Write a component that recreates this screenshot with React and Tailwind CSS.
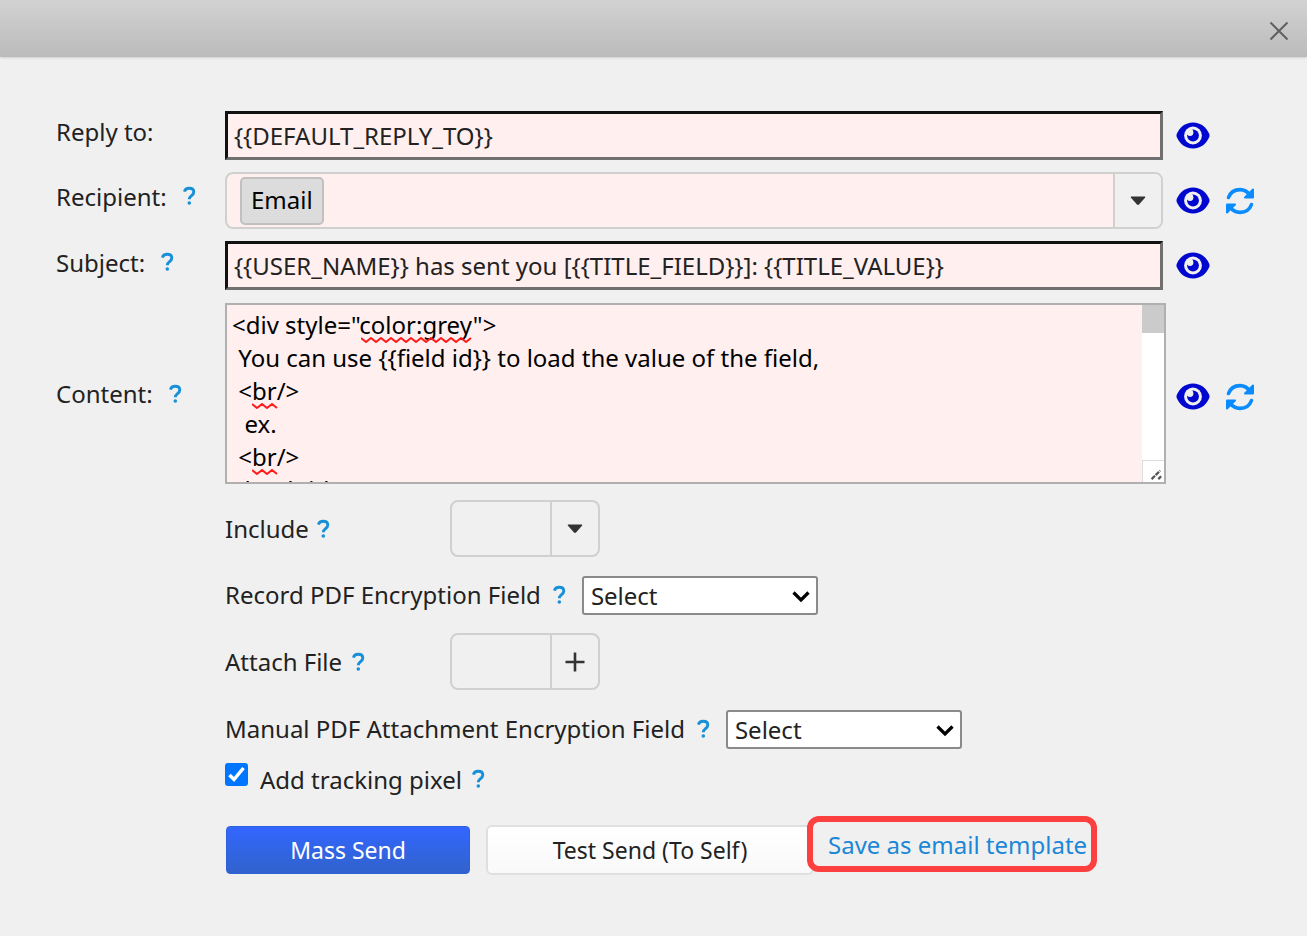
import { useState } from "react";

const body = `<div style="color:grey">
 You can use {{field id}} to load the value of the field,
 <br/>
  ex.
 <br/>
  load title
</div>`;

function Help() {
  return (
    <svg viewBox="0 0 13 20" className="h-5 w-[13px] shrink-0 text-[#1890d8]" fill="none" stroke="currentColor" aria-hidden="true">
      <path d="M1.4 5.6C2 3.4 3.9 2.3 6.2 2.300c2.800 0 4.600 1.400 4.600 3.700 0 1.900-1.100 2.800-2.500 3.900-1.300 1-2 1.700-2 3.400" strokeWidth="2.9" />
      <circle cx="6.3" cy="17" r="1.8" fill="currentColor" stroke="none" />
    </svg>
  );
}

function Eye() {
  return (
    <button type="button" aria-label="Preview" className="shrink-0">
      <svg viewBox="0 0 34 27" className="h-[27px] w-[34px]">
        <path d="M17 .5C25 .5 30.5 5.5 33.3 12c.3.9.3 2.1 0 3C30.5 21.5 25 26.5 17 26.5S3.5 21.5.7 15c-.3-.9-.3-2.1 0-3C3.5 5.5 9 .5 17 .5z" fill="#0008cf" />
        <circle cx="17" cy="13.5" r="8.9" fill="#f0f0f0" />
        <circle cx="17" cy="13.5" r="5.9" fill="#0008cf" />
        <circle cx="14" cy="10.5" r="3.4" fill="#f0f0f0" />
      </svg>
    </button>
  );
}

function Refresh() {
  return (
    <button type="button" aria-label="Reset" className="shrink-0">
      <svg viewBox="0 0 30 28" className="h-7 w-[30px]" fill="none" stroke="#0a8cff" strokeWidth="3.6" strokeLinecap="round" strokeLinejoin="round">
        <path d="M3.5 10.5C5.5 5 10 2.6 15 2.6c4.5 0 7.5 2 10.5 5.8" />
        <path d="M28 2.5v8h-8z" fill="#0a8cff" strokeWidth="2" />
        <path d="M26.5 17.5C24.5 23 20 25.4 15 25.4c-4.5 0-7.5-2-10.5-5.8" />
        <path d="M2 25.5v-8h8z" fill="#0a8cff" strokeWidth="2" />
      </svg>
    </button>
  );
}

function Caret() {
  return (
    <svg viewBox="0 0 16 10" className="h-[10px] w-4">
      <path d="M1.5.5h13c.8 0 1 .7.5 1.200L9 8.6c-.6.6-1.4.6-2 0L1 1.7C.5 1.2.7.5 1.5.5z" fill="#333" />
    </svg>
  );
}

function Plus() {
  return (
    <svg viewBox="0 0 20 20" className="h-5 w-5" stroke="#333" strokeWidth="2.6">
      <path d="M10 .5v19M.5 10h19" />
    </svg>
  );
}

function Wave({ width }) {
  const points = [];
  for (let x = 0; x <= width; x += 5) {
    points.push(`${x},${(x / 5) % 2 ? 5 : 1}`);
  }
  return (
    <svg width={width} height="7" fill="none" stroke="#ff1a1a" strokeWidth="2" strokeLinejoin="round">
      <polyline points={points.join(" ")} />
    </svg>
  );
}

function TextField({ id, value, onChange }) {
  return (
    <input
      id={id}
      type="text"
      value={value}
      onChange={(e) => onChange(e.target.value)}
      className="h-[49px] min-w-0 flex-1 border-3 border-t-[#111] border-r-[#707070] border-b-[#707070] border-l-[#111] bg-[#ffefef] px-[6px]"
    />
  );
}

function Combo({ id, label, children }) {
  return (
    <div className="flex h-[57px] w-[150px] overflow-hidden rounded-lg border-2 border-[#d0d0d0]">
      <input id={id} type="text" className="min-w-0 flex-1" />
      <button type="button" aria-label={label} className="flex w-12 items-center justify-center border-l-2 border-[#d0d0d0]">
        {children}
      </button>
    </div>
  );
}

function SelectBox({ id }) {
  return (
    <div className="relative w-[236px]">
      <select id={id} className="block h-[39px] w-full appearance-none rounded-[3px] border-2 border-[#8a8a8a] bg-white px-[7px]">
        <option>Select</option>
      </select>
      <svg viewBox="0 0 18 12" className="pointer-events-none absolute top-[15px] right-2 h-3 w-[18px]" fill="none" stroke="#000" strokeWidth="3.2">
        <path d="M1.5 1.5L9 9l7.5-7.5" />
      </svg>
    </div>
  );
}

export default function App() {
  const [replyTo, setReplyTo] = useState("{{DEFAULT_REPLY_TO}}");
  const [subject, setSubject] = useState("{{USER_NAME}} has sent you [{{TITLE_FIELD}}]: {{TITLE_VALUE}}");
  const [content, setContent] = useState(body);
  const [tracking, setTracking] = useState(true);

  return (
    <div className="min-h-screen bg-[#f0f0f0] font-['Noto_Sans','Open_Sans',sans-serif] text-[24px] leading-[33px] text-[#222]">
      {/* title bar */}
      <header className="flex h-[57px] items-center justify-end bg-linear-to-b from-[#d2d2d2] to-[#bbb] pt-1 pr-[18px] shadow-sm">
        <button type="button" aria-label="Close">
          <svg viewBox="0 0 20 20" className="h-5 w-5" stroke="#606060" strokeWidth="2">
            <path d="M1.5 1.5l17 17M18.5 1.5l-17 17" />
          </svg>
        </button>
      </header>

      <form className="pt-[54px] pr-[52px] pl-14" onSubmit={(e) => e.preventDefault()}>
        {/* addressing */}
        <div className="grid grid-cols-[169px_minmax(0,1fr)_92px] gap-y-3">
          <label htmlFor="reply" className="pt-1">Reply to:</label>
          <div className="flex">
            <TextField id="reply" value={replyTo} onChange={setReplyTo} />
          </div>
          <div className="flex items-center pl-[13px]"><Eye /></div>

          <div className="flex items-center gap-4 pb-[9px]">
            <label htmlFor="recipient">Recipient:</label>
            <Help />
          </div>
          <div className="flex h-[57px] overflow-hidden rounded-lg border-2 border-[#d0d0d0] bg-[#ffefef]">
            <span className="my-[3px] ml-[13px] flex h-12 items-center rounded-[5px] border-2 border-[#c0c0c0] bg-[#dcdcdc] px-[9px] pb-1 text-black">
              Email
            </span>
            <input id="recipient" type="text" className="min-w-0 flex-1" />
            <button type="button" aria-label="Choose recipient" className="flex w-12 items-center justify-center border-l-2 border-[#d0d0d0] bg-[#f0f0f0]">
              <Caret />
            </button>
          </div>
          <div className="flex items-center gap-[15px] pl-[13px]"><Eye /><Refresh /></div>

          <div className="flex items-center gap-4 pb-2">
            <label htmlFor="subject">Subject:</label>
            <Help />
          </div>
          <div className="flex pb-px">
            <TextField id="subject" value={subject} onChange={setSubject} />
          </div>
          <div className="flex items-center pb-[2px] pl-[13px]"><Eye /></div>

          <div className="flex items-center gap-4">
            <label htmlFor="content">Content:</label>
            <Help />
          </div>
          <div className="relative -mr-[3px] flex h-[181px] border-2 border-[#b0b0b0] bg-[#ffefef]">
            <textarea
              id="content"
              value={content}
              spellCheck={false}
              onChange={(e) => setContent(e.target.value)}
              className="min-w-0 flex-1 resize-none overflow-hidden px-[5px] pt-[3px] text-black"
            />
            {/* scrollbar */}
            <div className="flex w-[22px] flex-col justify-between bg-white">
              <div className="h-7 bg-[#cbcbcb]" />
              <svg viewBox="0 0 22 22" className="h-[22px] w-[22px] border-t border-l border-[#ddd]" stroke="#555" strokeWidth="2.4" strokeDasharray="5 1">
                <path d="M9 19l9-9M16 19l3-3" />
              </svg>
            </div>
            {/* spelling marks */}
            <div className="pointer-events-none absolute top-8 left-[134px]"><Wave width={114} /></div>
            <div className="pointer-events-none absolute top-[98px] left-[25px]"><Wave width={26} /></div>
            <div className="pointer-events-none absolute top-[164px] left-[25px]"><Wave width={26} /></div>
          </div>
          <div className="flex items-center gap-[15px] pt-[6px] pl-[13px]"><Eye /><Refresh /></div>
        </div>

        {/* attachments */}
        <div className="pt-4 pl-[169px]">
          <div className="flex items-center">
            <div className="flex w-[225px] items-center gap-2">
              <label htmlFor="include">Include</label>
              <Help />
            </div>
            <Combo id="include" label="Choose include"><Caret /></Combo>
          </div>
          <div className="mt-[19px] flex items-center">
            <div className="mr-4 flex items-center gap-3 pb-[2px]">
              <label htmlFor="record-field">Record PDF Encryption Field</label>
              <Help />
            </div>
            <SelectBox id="record-field" />
          </div>
          <div className="mt-[18px] flex items-center">
            <div className="flex w-[225px] items-center gap-[10px]">
              <label htmlFor="attach">Attach File</label>
              <Help />
            </div>
            <Combo id="attach" label="Add file"><Plus /></Combo>
          </div>
          <div className="mt-5 flex items-center">
            <div className="mr-4 flex items-center gap-3 pb-[2px]">
              <label htmlFor="manual-field">Manual PDF Attachment Encryption Field</label>
              <Help />
            </div>
            <SelectBox id="manual-field" />
          </div>
          <div className="mt-[14px] flex items-start">
            <label className="flex items-start">
              <span className="relative mr-3 flex">
                <input
                  type="checkbox"
                  checked={tracking}
                  onChange={(e) => setTracking(e.target.checked)}
                  className="h-[23px] w-[23px] appearance-none rounded-[3px] border-2 border-[#767676] bg-white checked:border-[#0075ff] checked:bg-[#0075ff]"
                />
                {tracking && (
                  <svg viewBox="0 0 23 23" className="pointer-events-none absolute h-[23px] w-[23px]" fill="none" stroke="#fff" strokeWidth="3.5">
                    <path d="M4.5 12l4.5 4.5L18.5 5" />
                  </svg>
                )}
              </span>
              Add tracking pixel
            </label>
            <div className="mt-[6px] ml-[10px] flex"><Help /></div>
          </div>

          {/* actions */}
          <div className="mt-5 flex items-start">
            <button type="submit" className="mt-[10px] ml-px h-12 w-[244px] rounded-[4px] border border-[#2f62d8] bg-linear-to-b from-[#3366ff] to-[#3162cc] text-[23px] text-white">
              Mass Send
            </button>
            <button type="button" className="mt-[9px] ml-4 h-[50px] w-[328px] rounded-[6px] border-2 border-[#dfdfdf] bg-linear-to-b from-white to-[#f9f9f9] text-[23px]">
              Test Send (To Self)
            </button>
            <a href="#save" className="-ml-[7px] flex h-14 items-center rounded-[12px] border-6 border-[#fc3f3f] bg-[#f0f0f0] pr-1 pl-[15px] text-[#1b87d6]">
              Save as email template
            </a>
          </div>
        </div>
      </form>
    </div>
  );
}
